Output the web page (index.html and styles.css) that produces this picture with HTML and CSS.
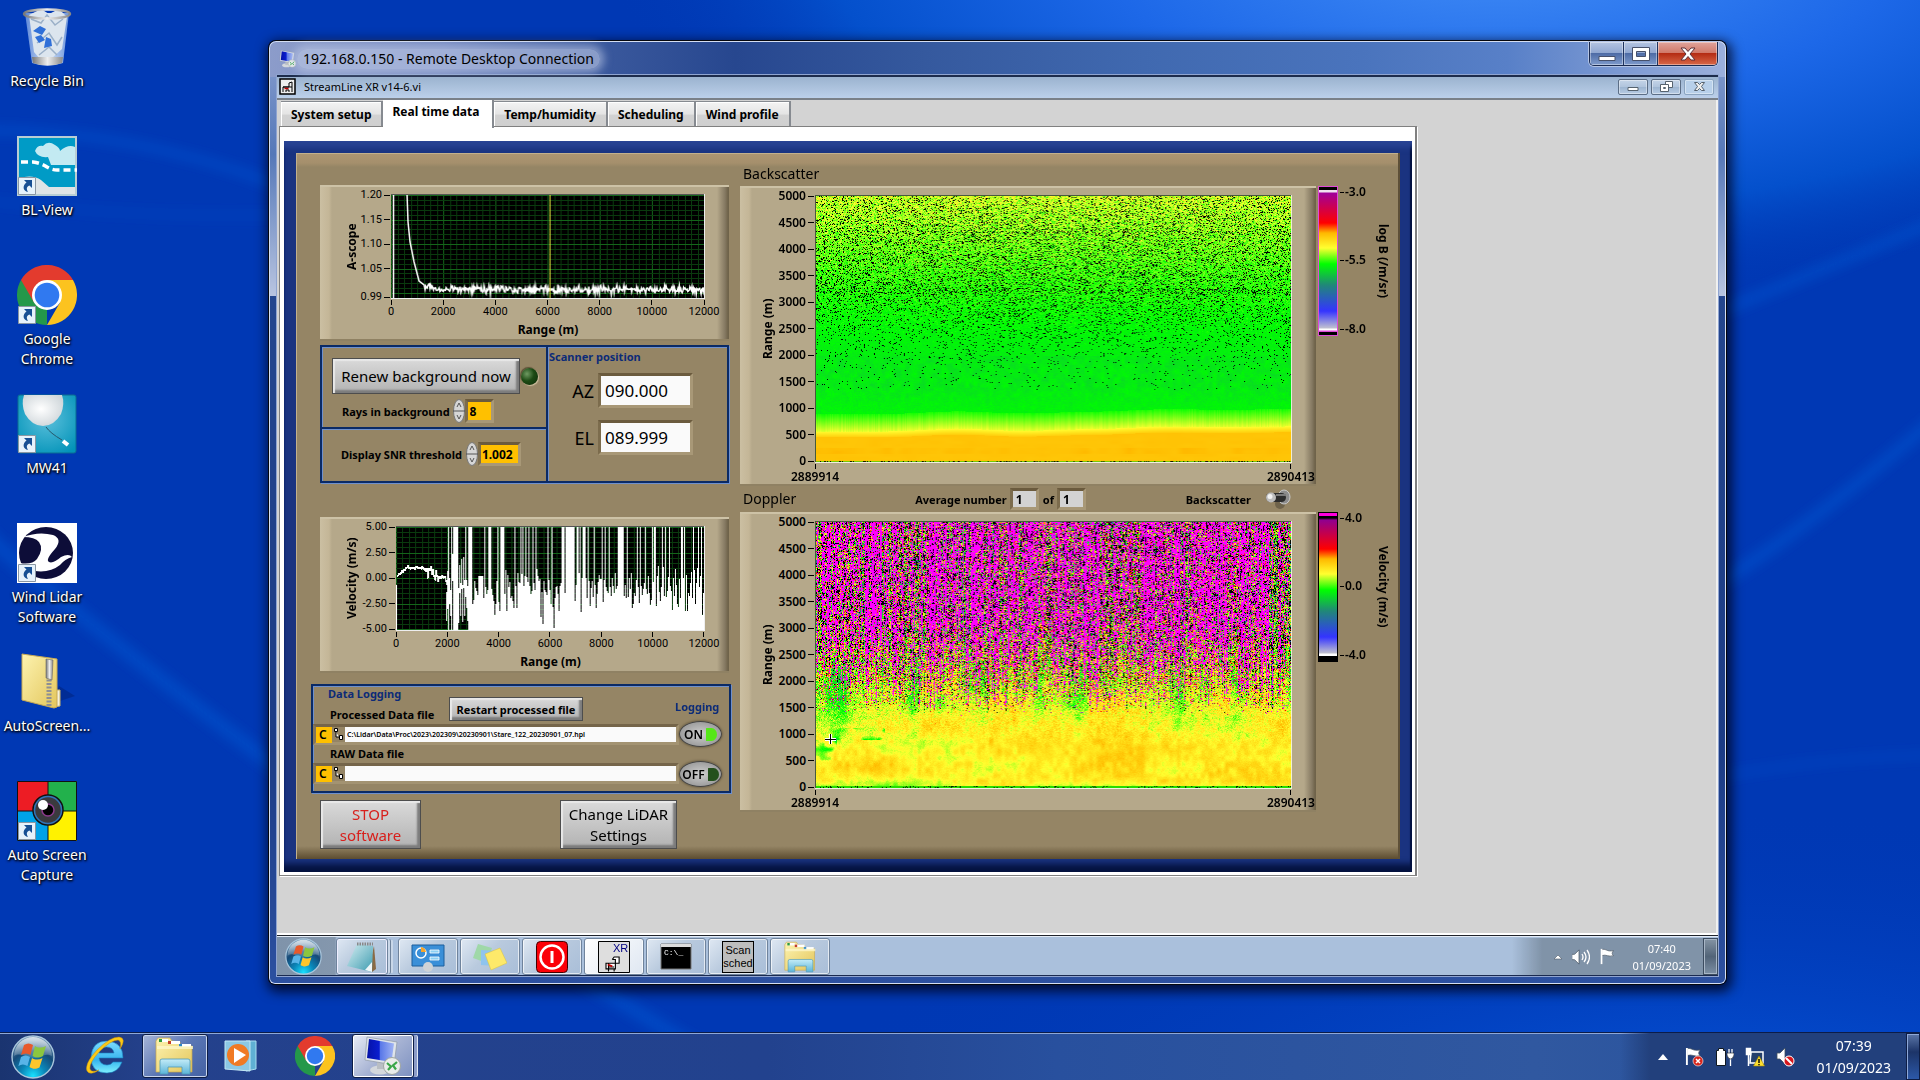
FILE: index.html
```html
<!DOCTYPE html>
<html lang="en">
<head>
<meta charset="utf-8">
<title>Desktop</title>
<link rel="stylesheet" href="styles.css">
</head>
<body>
<svg class="defs" width="0" height="0" aria-hidden="true">
  <defs>
    <radialGradient id="orbFill" cx="50%" cy="95%" r="85%">
      <stop offset="0" stop-color="#19e0ff"/><stop offset=".35" stop-color="#0a86b8"/><stop offset=".7" stop-color="#164a78"/><stop offset="1" stop-color="#5f87a8"/>
    </radialGradient>
    <linearGradient id="gloss" x2="0" y2="1"><stop offset="0" stop-color="#fff" stop-opacity=".75"/><stop offset="1" stop-color="#fff" stop-opacity=".12"/></linearGradient>
    <linearGradient id="folderFill" x2="1" y2="1"><stop offset="0" stop-color="#fdf3b0"/><stop offset="1" stop-color="#e3c65c"/></linearGradient>
    <linearGradient id="glass" x2="0" y2="1"><stop offset="0" stop-color="#c4ecf8"/><stop offset="1" stop-color="#5bb4d8"/></linearGradient>
    <linearGradient id="screen" x2="1"><stop offset="0" stop-color="#0512a8"/><stop offset=".45" stop-color="#0a1ed0"/><stop offset=".5" stop-color="#5a78e8"/><stop offset="1" stop-color="#a0b4f4"/></linearGradient>
    <linearGradient id="eFill" x2="0" y2="1"><stop offset="0" stop-color="#7fdcff"/><stop offset=".6" stop-color="#35b4ee"/><stop offset="1" stop-color="#7ff0ff"/></linearGradient>
    <linearGradient id="binFill" x2="1"><stop offset="0" stop-color="#5b86d8"/><stop offset=".5" stop-color="#d8e6f6"/><stop offset="1" stop-color="#6c94dc"/></linearGradient>
    <linearGradient id="metal" x2="1"><stop offset="0" stop-color="#777"/><stop offset=".5" stop-color="#eee"/><stop offset="1" stop-color="#888"/></linearGradient>
    <radialGradient id="balloon" cx=".45" cy=".45" r=".6"><stop offset="0" stop-color="#fff"/><stop offset="1" stop-color="#cfd6da"/></radialGradient>
    <radialGradient id="teal" cx=".5" cy=".4" r=".7"><stop offset="0" stop-color="#5cc0dc"/><stop offset="1" stop-color="#0293b8"/></radialGradient>
    <linearGradient id="note" x2="1" y2="1"><stop offset="0" stop-color="#d6eef2"/><stop offset="1" stop-color="#3d9cb0"/></linearGradient>

    <symbol id="orb" viewBox="0 0 44 44">
      <circle cx="22" cy="22" r="21" fill="url(#orbFill)" stroke="#a9c6dc" stroke-width="1.4"/>
      <path d="M3 21a19 19 0 0 1 38 0c-8-4-12 3-19 2S9 17 3 21z" fill="url(#gloss)"/>
      <path d="M13 10c3-2 6-2 9 0l-2.600 10c-3-2-6-2-9.400 0z" fill="#e8592b"/>
      <path d="M24 11c3 2 7 2 11 0l-3 10c-4 2-7 2-10.500 0z" fill="#8cc63f"/>
      <path d="M10 22c3-2 6-2 9 0l-2.600 9c-3-2-6-2-9 0z" fill="#58b4e8"/>
      <path d="M21 23c3 2 7 2 10.500 0l-3 9.500c-4 2-7 1.500-10-.5z" fill="#fcc62c"/>
    </symbol>
    <symbol id="chrome" viewBox="0 0 60 60">
      <path d="M30 30 4 15a30 30 0 0 1 52 0z" fill="#e33b2e"/>
      <path d="M30 30 30 60A30 30 0 0 1 4 15z" fill="#24984a"/>
      <path d="M30 15H56A30 30 0 0 1 30 60L43 37.500z" fill="#fcc31f"/>
      <path d="M4 15 17 37.500 30 30 30 15z" fill="#e33b2e"/>
      <circle cx="30" cy="30" r="15" fill="#fff"/><circle cx="30" cy="30" r="12.300" fill="#3079f0"/>
    </symbol>
    <symbol id="shortcut" viewBox="0 0 18 18">
      <path d="M.5.5h17v17H.5z" fill="#e6f2fb" stroke="#8a97a3"/>
      <path d="M6 3h8v8l-2.500-2.500C8 10 8.500 12 10 15c-5-1-6-6-1.500-9.500z" fill="#174f93"/>
    </symbol>
    <symbol id="explorer" viewBox="0 0 40 38">
      <path d="M1 4 3 1h12l2 3 8 1v3l12 1v26H1z" fill="url(#folderFill)" stroke="#c9a84a" stroke-width=".7"/>
      <path d="M4 2h9v3H4z" fill="#fff"/><path d="M4 2h3v3H4z" fill="#2f9a3c"/>
      <path d="M13 4h12v3H13z" fill="#fff"/><path d="M13 4h3v3h-3z" fill="#c4402b"/>
      <path d="M24 7h12v3H24z" fill="#fff"/><path d="M24 7h3v3h-3z" fill="#2c87c8"/>
      <path d="M2 9h36v3H2z" fill="#fdf6c8" opacity=".8"/>
      <path d="M5 37V24q0-2 2-2h26q2 0 2 2v13h-8v-7H13v7z" fill="url(#glass)" stroke="#4f9ab8" stroke-width=".8"/>
    </symbol>
    <symbol id="remote" viewBox="0 0 40 40">
      <ellipse cx="17" cy="34" rx="10" ry="4.500" fill="#d4d8dc"/><path d="M14 25h7v8h-7z" fill="#b9bec4"/>
      <path d="M4 1 34 6 31 29 2 24z" fill="#dfe4ea" stroke="#8e98a4" stroke-width=".7"/>
      <path d="M6 3 31 7.500 28.500 26 4 22z" fill="url(#screen)"/>
      <circle cx="29" cy="30" r="8.500" fill="#e9ecea" stroke="#9fa6a2"/>
      <path d="m24 27 4 3.500-3 3.500M34 26l-4 3.500 3 4" fill="none" stroke="#3aa648" stroke-width="2.200"/>
    </symbol>
    <symbol id="vi" viewBox="0 0 28 32">
      <path d="M2 18h15v9H2zM6 18v13M15 27v4M6 24h9M17 18v-6h-5M12 12l3-4h8v10h-6" fill="#fff" stroke="#000" stroke-width="1.800"/>
      <path d="m5 20 7 3" stroke="#c00000" stroke-width="3"/>
    </symbol>
    <symbol id="flag" viewBox="0 0 18 20"><path d="M2 1v18M2 2c5-2 6 3 14 1-2 3-2 4 0 6-6 2-8-2-14 0z" fill="#fff" stroke="#4a5663" stroke-width=".8"/><path d="M2 1v18" stroke="#fff" stroke-width="2"/></symbol>
    <symbol id="speaker" viewBox="0 0 18 18"><path d="M1 6h3l5-5v16l-5-5H1z" fill="#fff" stroke="#42505e" stroke-width=".8"/></symbol>
  </defs>
</svg>

<svg class="wallpaper" viewBox="0 0 1920 1080" preserveAspectRatio="none" aria-hidden="true">
  <defs>
    <radialGradient id="sky" gradientUnits="userSpaceOnUse" cx="1500" cy="-60" r="900" gradientTransform="matrix(1 0 0 .4 0 -36)">
      <stop offset="0" stop-color="#4590f8"/><stop offset=".45" stop-color="#1d68e8"/><stop offset=".75" stop-color="#0450cc"/><stop offset="1" stop-color="#0038b4" stop-opacity="0"/>
    </radialGradient>
    <radialGradient id="floor" gradientUnits="userSpaceOnUse" cx="1700" cy="1130" r="900" gradientTransform="matrix(1 0 0 .36 0 723)">
      <stop offset="0" stop-color="#0656dc"/><stop offset="1" stop-color="#0038b4" stop-opacity="0"/>
    </radialGradient>
    <filter id="soft"><feGaussianBlur stdDeviation="6"/></filter>
  </defs>
  <path fill="#0038b4" d="M0 0h1920v1080H0z"/>
  <path fill="url(#sky)" d="M0 0h1920v1080H0z"/>
  <path fill="url(#floor)" d="M0 0h1920v1080H0z"/>
  <g filter="url(#soft)" fill="none" stroke="#0a62dc" stroke-opacity=".4">
    <path d="M-20 130Q140 130 290 190T640 420" stroke-width="8"/>
    <path d="M-20 200Q140 220 300 214" stroke-width="3"/>
    <path d="M-20 530Q80 620 280 770T700 1050" stroke-width="14"/>
    <path d="M1700 595Q1800 535 1940 415" stroke-width="12"/>
    <path d="M1700 320Q1820 270 1940 220" stroke-width="10"/>
    <path d="M1700 780Q1820 757 1940 755" stroke-width="4"/>
  </g>
</svg>

<main class="desk">
  <nav class="icons" aria-label="Desktop">
    <a class="icon" href="#bin">
      <svg width="60" height="60" viewBox="0 0 60 60"><path d="M8 6h44l-6 50q-16 5-31 0z" fill="url(#binFill)"/><path d="m12 8 12-6 8 5 10-5 8 8-5 32-10 9-12 1-6-7z" fill="#dce5ee"/><path d="m14 12 10 4 6-8 8 10 8-6M20 36l12-10 8 12 5-8M22 48l10-8 8 8" fill="none" stroke="#9bb0c8" stroke-width="1.500"/><path d="m16 24 7-5 6 3-4 6zM22 36l-4-6 6-2 4 5zM29 30l5 2 1 7-8 2z" fill="#2f6fd8"/><path d="m15 50 31 0-1 6q-14 5-29 0z" fill="url(#metal)"/><ellipse cx="30" cy="7" rx="23" ry="4.500" fill="none" stroke="url(#metal)" stroke-width="2.500"/></svg>
      <span>Recycle Bin</span></a>
    <a class="icon" href="#blview">
      <svg width="60" height="60" viewBox="0 0 60 60"><path d="M0 0h60v60H0z" fill="#b8cdd4"/><path d="M2 2h56v56H2z" fill="#009bc6"/><path d="M18 15q2-6 8-5 5-6 12-1 5 3 5 6 8-7 15-4v18H34l-3-8q-10 1-13-6z" fill="#c3eaf2"/><path d="M4 26h12q8 1 14 5 5 3 10 3h20" fill="none" stroke="#fff" stroke-width="3.500" stroke-dasharray="7 4"/><path d="M2 42q14-4 22 2l8 7h26v7H2z" fill="#dfe4e6"/><use href="#shortcut" x="1" y="41" width="18" height="18"/></svg>
      <span>BL-View</span></a>
    <a class="icon" href="#chrome-app">
      <svg width="60" height="60" viewBox="0 0 60 60"><use href="#chrome" width="60" height="60"/><use href="#shortcut" x="1" y="41" width="18" height="18"/></svg>
      <span>Google Chrome</span></a>
    <a class="icon" href="#mw41">
      <svg width="60" height="60" viewBox="0 0 60 60"><rect x="1" y="1" width="58" height="58" rx="2" fill="url(#teal)" stroke="#0a6d92"/><path d="M7 1h38q3 9-1 19-7 12-18 12T8 20Q4 10 7 1z" fill="url(#balloon)"/><path d="M29 33q4 6 16 13" fill="none" stroke="#26576b"/><path d="m46 47 5 4" stroke="#fff" stroke-width="4"/><use href="#shortcut" x="1" y="41" width="18" height="18"/></svg>
      <span>MW41</span></a>
    <a class="icon" href="#lidar">
      <svg width="60" height="60" viewBox="0 0 60 60"><path d="M0 0h60v60H0z" fill="#fff"/><ellipse cx="29" cy="30" rx="27" ry="26" fill="#0d0d38"/><path d="M6 14Q22 8 36 12q10 4 2 14-10 11-6 13 4 2 12-5 8-4 11 0-7 2-12 8-10 8-25 6Q6 44 3 40q12 2 17-4 7-10 2-17Q18 14 6 14z" fill="#fff"/><use href="#shortcut" x="1" y="41" width="18" height="18"/></svg>
      <span>Wind Lidar Software</span></a>
    <a class="icon" href="#zip">
      <svg width="60" height="60" viewBox="0 0 60 60"><path d="m34 52 24-8-16-10z" fill="#001c66" opacity=".4"/><path d="M36 38h7v16l-7 1z" fill="#f4f0dc" stroke="#c9b468"/><path d="m5 2 35 5v48l-3 1L5 48z" fill="url(#folderFill)" stroke="#c7a954"/><path d="M32 24v30" stroke="#8d8f94" stroke-width="5" stroke-dasharray="2 1.500"/><path d="m29 7 7 1-1 20-6-2z" fill="url(#metal)" stroke="#666" stroke-width=".6"/></svg>
      <span>AutoScreen...</span></a>
    <a class="icon" href="#capture">
      <svg width="60" height="60" viewBox="0 0 60 60"><path d="M0 0h31v30H0z" fill="#ed1c24"/><path d="M31 0h29v30H31z" fill="#22b14c"/><path d="M0 30h31v30H0z" fill="#00a2e8"/><path d="M31 30h29v30H31z" fill="#fff200"/><path d="M.5.500h59v59H.500zM31 0v60M0 30h60" fill="none" stroke="#111"/><circle cx="31" cy="29" r="15" fill="#3a3a3e" stroke="#111" stroke-width="1.500"/><circle cx="31" cy="29" r="13.500" fill="none" stroke="#2f74b8" stroke-width="1.500"/><circle cx="31" cy="29" r="6" fill="#000" stroke="#8c3a8c" stroke-width="1.500"/><circle cx="26" cy="24" r="5" fill="#fff"/><use href="#shortcut" x="1" y="41" width="18" height="18"/></svg>
      <span>Auto Screen Capture</span></a>
  </nav>

  <section class="window" aria-label="Remote Desktop Connection">
    <header class="titlebar">
      <svg width="18" height="18"><use href="#remote"/></svg>
      <h1>192.168.0.150 - Remote Desktop Connection</h1>
      <div class="caption-buttons">
        <button aria-label="Minimize"><svg width="18" height="14" viewBox="0 0 18 14"><path d="M1 9.500h16v4H1z" fill="#fff" stroke="#47506a"/></svg></button>
        <button aria-label="Maximize"><svg width="18" height="14" viewBox="0 0 18 14"><path d="M.5.5h17v13H.5zM4.500 4.500v5h9v-5z" fill="#fff" fill-rule="evenodd" stroke="#47506a"/></svg></button>
        <button class="close" aria-label="Close"><svg width="16" height="14" viewBox="0 0 16 14"><path d="M1 1h4l3 3.500L11 1h4l-5 6 5 6h-4L8 9.500 5 13H1l5-6z" fill="#fff" stroke="#5c3038"/></svg></button>
      </div>
    </header>

    <div class="client">
      <header class="mdi">
        <svg width="17" height="17" viewBox="0 0 17 17"><path d="M1 1h15v15H1z" fill="#eee" stroke="#000" stroke-width="1.500"/><path d="M4 14V9h9v5M4 9h6V5l3-1v5M7 14v-2h3v2" fill="none" stroke="#000"/><path d="M5.500 10.500h4" stroke="#c00000" stroke-width="1.500"/></svg>
        <h2>StreamLine XR v14-6.vi</h2>
        <div class="mdi-buttons">
          <button aria-label="Minimize VI"><svg width="12" height="10" viewBox="0 0 12 10"><path d="M1 5.500h10v3H1z" fill="#fff" stroke="#56626e"/></svg></button>
          <button aria-label="Restore VI"><svg width="13" height="11" viewBox="0 0 13 11"><path d="M5.500.5h7v6h-7z" fill="#fff" stroke="#56626e"/><path d="M.5 3.500h8v7h-8z" fill="#fff" stroke="#56626e"/><path d="M3.500 6.500h2v1h-2z" fill="#fff" stroke="#56626e"/></svg></button>
          <button class="dim" aria-label="Close VI"><svg width="11" height="9" viewBox="0 0 11 9"><path d="M.5.5h3l2 2 2-2h3l-3 4 3 4h-3l-2-2-2 2h-3l3-4z" fill="#eee" stroke="#56626e"/></svg></button>
        </div>
      </header>

      <div class="workspace">
        <div class="tabs" role="tablist">
          <button role="tab">System setup</button>
          <button role="tab" class="active" aria-selected="true">Real time data</button>
          <button role="tab">Temp/humidity</button>
          <button role="tab">Scheduling</button>
          <button role="tab">Wind profile</button>
        </div>
        <div class="tab-page">
          <div class="blue-frame">
            <div class="front-panel">
              <div class="left">
                <section class="panel small">
                  <h3 class="y-title">A-scope</h3>
                  <ul class="y-axis uneven"><li>1.20</li><li>1.15</li><li>1.10</li><li>1.05</li><li>0.99</li></ul>
                  <canvas id="ascope" width="313" height="105"></canvas>
                  <ul class="x-axis"><li>0</li><li>2000</li><li>4000</li><li>6000</li><li>8000</li><li>10000</li><li>12000</li></ul>
                  <h3 class="x-title">Range (m)</h3>
                </section>

                <div class="controls">
                  <div class="group renew">
                    <div class="row"><button class="metal big">Renew background now</button><i class="led"></i></div>
                    <div class="row rays"><label for="rays">Rays in background</label>
                      <svg class="spin" width="12" height="24" viewBox="0 0 12 24"><ellipse cx="6" cy="12" rx="5.500" ry="11.500" fill="#d6d6d6" stroke="#777"/><path d="M0 12h12M4 8l2-4 2 4M4 16l2 4 2-4" fill="none" stroke="#555"/></svg>
                      <input class="sunk amber w1" id="rays" value="8"></div>
                  </div>
                  <div class="group snr">
                    <div class="row"><label for="snr">Display SNR threshold</label>
                      <svg class="spin" width="12" height="24" viewBox="0 0 12 24"><ellipse cx="6" cy="12" rx="5.500" ry="11.500" fill="#d6d6d6" stroke="#777"/><path d="M0 12h12M4 8l2-4 2 4M4 16l2 4 2-4" fill="none" stroke="#555"/></svg>
                      <input class="sunk amber w2" id="snr" value="1.002"></div>
                  </div>
                  <div class="group scanner">
                    <h3 class="blue">Scanner position</h3>
                    <div class="row"><label for="az">AZ</label><input class="sunk pos" id="az" value="090.000"></div>
                    <div class="row"><label for="el">EL</label><input class="sunk pos" id="el" value="089.999"></div>
                  </div>
                </div>

                <section class="panel small velocity">
                  <h3 class="y-title">Velocity (m/s)</h3>
                  <ul class="y-axis"><li>5.00</li><li>2.50</li><li>0.00</li><li>-2.50</li><li>-5.00</li></ul>
                  <canvas id="velocity" width="308" height="105"></canvas>
                  <ul class="x-axis"><li>0</li><li>2000</li><li>4000</li><li>6000</li><li>8000</li><li>10000</li><li>12000</li></ul>
                  <h3 class="x-title">Range (m)</h3>
                </section>

                <section class="group logging">
                  <div class="files">
                    <h3 class="blue">Data Logging</h3>
                    <div class="row"><label for="proc">Processed Data file</label><button class="metal restart">Restart processed file</button></div>
                    <div class="path"><b>C</b><svg width="9" height="15" viewBox="0 0 9 15"><path d="M.5 1.500h3v3h-3zM2 5v5h3M5.500 8.500h3v4h-3z" fill="#fff" stroke="#000"/></svg><input id="proc" value="C:\Lidar\Data\Proc\2023\202309\20230901\Stare_122_20230901_07.hpl"></div>
                    <label for="raw">RAW Data file</label>
                    <div class="path"><b>C</b><svg width="9" height="15" viewBox="0 0 9 15"><path d="M.5 1.500h3v3h-3zM2 5v5h3M5.500 8.500h3v4h-3z" fill="#fff" stroke="#000"/></svg><input id="raw" value=""></div>
                  </div>
                  <div class="switches">
                    <h3 class="blue">Logging</h3>
                    <button class="oval on">ON<i></i></button>
                    <button class="oval">OFF<i></i></button>
                  </div>
                </section>

                <div class="actions">
                  <button class="metal stop">STOP software</button>
                  <button class="metal change">Change LiDAR Settings</button>
                </div>
              </div>

              <div class="right">
                <h3 class="plot-name first">Backscatter</h3>
                <div class="map">
                  <section class="panel large">
                    <h3 class="y-title">Range (m)</h3>
                    <ul class="y-axis ten"><li>5000</li><li>4500</li><li>4000</li><li>3500</li><li>3000</li><li>2500</li><li>2000</li><li>1500</li><li>1000</li><li>500</li><li>0</li></ul>
                    <canvas id="backscatter" width="478" height="268"></canvas>
                    <ul class="x-axis ends"><li>2889914</li><li>2890413</li></ul>
                  </section>
                  <div class="scale">
                    <i class="ramp"></i>
                    <ul class="ramp-axis"><li>-3.0</li><li>-5.5</li><li>-8.0</li></ul>
                    <h3>log B (/m/sr)</h3>
                  </div>
                </div>
                <div class="between">
                  <h3 class="plot-name">Doppler</h3>
                  <label for="avg">Average number</label><input class="sunk count" id="avg" value="1">
                  <label for="avg-of">of</label><input class="sunk count" id="avg-of" value="1">
                  <span class="toggle-label">Backscatter</span>
                  <button class="toggle" aria-label="Backscatter display"><svg width="26" height="20" viewBox="0 0 26 20"><ellipse cx="15" cy="15" rx="5" ry="5" fill="#000" opacity=".25"/><ellipse cx="19" cy="8" rx="6" ry="7" fill="#8d8d8d" stroke="#c8c8c8"/><rect x="1" y="4" width="20" height="9" rx="4.500" fill="#2c2c2c"/><path d="M11 6h10" stroke="#7a7a7a" stroke-width="2"/><circle cx="6" cy="8.500" r="5" fill="#bdbdbd"/><circle cx="5" cy="7.500" r="2.500" fill="#f2f2f2"/></svg></button>
                </div>
                <div class="map">
                  <section class="panel large">
                    <h3 class="y-title">Range (m)</h3>
                    <ul class="y-axis ten"><li>5000</li><li>4500</li><li>4000</li><li>3500</li><li>3000</li><li>2500</li><li>2000</li><li>1500</li><li>1000</li><li>500</li><li>0</li></ul>
                    <canvas id="doppler" width="478" height="268"></canvas>
                    <ul class="x-axis ends"><li>2889914</li><li>2890413</li></ul>
                  </section>
                  <div class="scale">
                    <i class="ramp dop"></i>
                    <ul class="ramp-axis"><li>4.0</li><li>0.0</li><li>-4.0</li></ul>
                    <h3>Velocity (m/s)</h3>
                  </div>
                </div>
              </div>
            </div>
          </div>
        </div>
      </div>

      <footer class="inner-bar">
        <button class="start" aria-label="Inner start"><svg width="37" height="37"><use href="#orb"/></svg></button>
        <button class="task stacked" aria-label="Notepad"><svg width="32" height="32" viewBox="0 0 32 32"><path d="M28 5 30 28l-4 3-3-5z" fill="#8a6a44"/><path d="M11 3 27 5 26 31 1 25z" fill="url(#note)"/><path d="m26 31-7-2 7-8z" fill="#eef6f8"/><path d="M11 3h16" stroke="#888" stroke-width="3" stroke-dasharray="1.500 1"/></svg></button>
        <button class="task" aria-label="Control panel"><svg width="34" height="32" viewBox="0 0 34 32"><path d="M1 4h32v21H1z" fill="#3a8fd8" stroke="#1c5f9c"/><circle cx="10" cy="12" r="5" fill="none" stroke="#fff" stroke-width="1.500"/><path d="M10 6a6 6 0 0 1 5 5h-5z" fill="#f5a52c"/><path d="M19 9h9v3h-9zM19 16h9v3h-9z" fill="#8cd0f4" stroke="#fff" stroke-width=".8"/><circle cx="17" cy="26" r="5" fill="#cfd3d6"/></svg></button>
        <button class="task" aria-label="Sticky notes"><svg width="34" height="30" viewBox="0 0 34 30"><path d="m5 2 14 4-5 15L0 16z" fill="#9fd8a8"/><path d="m8 8 15 1-1 15-14-1z" fill="#8fc4ee"/><path d="m12 12 15-6 7 15-16 7z" fill="#fde96a" stroke="#d9c23c" stroke-width=".5"/></svg></button>
        <button class="task" aria-label="Power"><svg width="32" height="32" viewBox="0 0 32 32"><rect x=".5" y=".5" width="31" height="31" rx="4" fill="#fb0007" stroke="#400"/><circle cx="16" cy="16" r="11.500" fill="none" stroke="#fff" stroke-width="2.500"/><path d="M16 10v12" stroke="#fff" stroke-width="3"/></svg></button>
        <button class="task lit" aria-label="XR"><svg width="32" height="32" viewBox="0 0 32 32"><path d="M.5.5h31v31H.5z" fill="#dedede" stroke="#000"/><text x="15" y="11" class="xr">XR</text><use href="#vi" x="6" y="11" width="19" height="20"/></svg></button>
        <button class="task" aria-label="Command prompt"><svg width="32" height="28" viewBox="0 0 32 28"><path d="M1 1h30v25H1z" fill="#000" stroke="#777"/><path d="M1 1h30v3H1z" fill="#dcdcdc"/><text x="4" y="12" class="cmd">C:\_</text></svg></button>
        <button class="task" aria-label="Scan sched"><span class="scan">Scan<br>sched</span></button>
        <button class="task" aria-label="Explorer"><svg width="33" height="32"><use href="#explorer"/></svg></button>
        <div class="inner-tray">
          <svg width="10" height="6" viewBox="0 0 10 6"><path d="m1 5 4-4 4 4z" fill="#fff" stroke="#4d5b68" stroke-width=".6"/></svg>
          <svg width="18" height="16" viewBox="0 0 18 16"><use href="#speaker" width="16" height="16" x="-1"/><path d="M10 5q2 3 0 6M12 3q4 5 0 10M15 1q5 7 0 14" fill="none" stroke="#fff" stroke-width="1.300"/></svg>
          <svg width="17" height="17"><use href="#flag"/></svg>
          <time>07:40<br>01/09/2023</time>
          <button class="peek" aria-label="Show inner desktop"></button>
        </div>
      </footer>
    </div>
  </section>
</main>

<footer class="taskbar">
  <button class="start" aria-label="Start"><svg width="44" height="44"><use href="#orb"/></svg></button>
  <button class="pin" aria-label="Internet Explorer"><svg width="40" height="40" viewBox="0 0 40 40"><path d="M38 22H14q1 7 8 7 4 0 6-3h9q-4 11-15 11Q6 37 6 21 7 5 22 5q16 1 16 17zM14 17h15q-1-6-7.500-6T14 17z" fill="url(#eFill)" stroke="#1a7fc0" stroke-width=".6"/><path d="M35 13Q42 2 34 1 25 1 12 14-1 28 2 35q3 5 12-1-8 3-9-1-1-6 9-17Q26 4 33 4q4 1 2 9z" fill="#fbc916" stroke="#c98f0c" stroke-width=".5"/></svg></button>
  <button class="pin open" aria-label="Windows Explorer"><svg width="40" height="38"><use href="#explorer"/></svg></button>
  <button class="pin" aria-label="Media Player"><svg width="34" height="34" viewBox="0 0 34 34"><path d="M22 2h10v28l-10 2z" fill="#5fb0d4" stroke="#a8dcf0"/><path d="M1 2h25v30L1 30z" fill="#8cc8e4" stroke="#c4e8f6"/><circle cx="14" cy="16" r="11" fill="#f07a24"/><path d="m10 9 12 7-12 8z" fill="#fff"/></svg></button>
  <button class="pin chrome" aria-label="Chrome"><svg width="40" height="40"><use href="#chrome"/></svg></button>
  <button class="pin current" aria-label="Remote Desktop"><svg width="40" height="40"><use href="#remote"/></svg></button>
  <div class="tray">
    <svg width="10" height="6" viewBox="0 0 10 6"><path d="m0 6 5-6 5 6z" fill="#fff"/></svg>
    <svg width="19" height="20" viewBox="0 0 19 20"><use href="#flag" width="17" height="19"/><circle cx="13" cy="14" r="5" fill="#d8261c" stroke="#fff" stroke-width=".6"/><path d="m11 12 4 4m0-4-4 4" stroke="#fff" stroke-width="1.500"/></svg>
    <svg width="19" height="20" viewBox="0 0 19 20"><path d="M1.500 3.500h2v-2h5v2h2v15h-9z" fill="#fff" stroke="#101820"/><path d="M14 2v4m3-4v4M15.500 10v9" fill="none" stroke="#fff" stroke-width="1.300"/><path d="M12 6h7v2q-1 4-3.500 4T12 8z" fill="#fff" stroke="#101820" stroke-width=".6"/></svg>
    <svg width="20" height="20" viewBox="0 0 20 20"><path d="M6 5h12v11H5z" fill="#24406c" stroke="#fff" stroke-width="1.500"/><path d="M1.500 1.500h4v6h-4zM3.500 8v11" fill="#fff" stroke="#fff" stroke-width="1.500"/><path d="m14 9 5.500 10h-11z" fill="#ffe030" stroke="#a88c00" stroke-width=".6"/><path d="M14 12v4m0 1v1.200" stroke="#000" stroke-width="1.400"/></svg>
    <svg width="19" height="20" viewBox="0 0 19 20"><use href="#speaker" width="18" height="18"/><circle cx="13" cy="14" r="5" fill="#d8161c" stroke="#fff"/><path d="m10 11 6 6" stroke="#fff" stroke-width="2"/></svg>
    <time>07:39<br>01/09/2023</time>
    <button class="peek" aria-label="Show desktop"></button>
  </div>
</footer>
<script src="plots.js"></script>
</body>
</html>
```
FILE: styles.css
```css
* { box-sizing: border-box; }

body {
  margin: 0;
  min-height: 100vh;
  display: flex;
  flex-direction: column;
  position: relative;
  background: #0038b4;
  font-family: "Noto Sans", "Open Sans", sans-serif;
  font-size: 12px;
  color: #000;
}

h1, h2, h3, ul { margin: 0; padding: 0; list-style: none; font-size: inherit; }
button, input { font: inherit; color: inherit; margin: 0; padding: 0; border: 0; border-radius: 0; }
svg, canvas { display: block; }
.defs { position: absolute; }

.wallpaper { position: absolute; inset: 0; width: 100%; height: 100%; z-index: -1; }

/* Desktop */
.desk { flex: 1; display: flex; align-items: flex-start; padding-right: 194px; }

.icons { flex: 0 0 94px; margin-right: 175px; padding-top: 7px; display: grid; grid-auto-rows: 129px; }
.icon {
  display: flex;
  flex-direction: column;
  align-items: center;
  gap: 4px;
  font-size: 14px;
  line-height: 20px;
  text-align: center;
  color: #fff;
  text-decoration: none;
  text-shadow: 1px 1px 2px #000, 0 1px 3px #000;
}

/* Remote desktop window */
.window {
  flex: 1;
  min-width: 0;
  margin-top: 41px;
  padding: 0 8px 8px;
  border-radius: 7px 7px 6px 6px;
  background: linear-gradient(90deg, #8c9cca, #7488c0 12%, #3c5a9e 22%, #27478f 32%, #35599e 45%, #4069b0 60%, #4a74bd 75%, #5880c8 85%, #9cb0dc) 0 0 / 100% 36px no-repeat,
    linear-gradient(#8aa0d0, #5578b8 12%, #b8c4e0 27%, #24468e 27%, #1c3c86 75%, #2c50a0);
  box-shadow: inset 0 0 0 1px #d4def2, 0 0 0 1px #05070d, 2px 4px 12px 4px rgba(0,0,20,.75);
}
.titlebar { display: flex; align-items: center; height: 34px; padding-top: 1px; }
.titlebar > svg { margin-left: 2px; }
.titlebar h1 {
  padding: 0 6px;
  font-size: 14px;
  line-height: 20px;
  font-weight: 400;
  border-radius: 10px;
  background: rgba(190,202,230,.6);
  box-shadow: 0 0 8px 4px rgba(190,202,230,.6);
}
.caption-buttons { display: flex; align-self: flex-start; margin-left: auto; border: 1px solid #1a2a50; border-top: 0; border-radius: 0 0 5px 5px; box-shadow: 0 0 0 1px #b4c4e4; overflow: hidden; }
.caption-buttons button {
  width: 34px;
  height: 23px;
  padding-top: 1px;
  display: grid;
  place-items: center;
  border-right: 1px solid #1f335f;
  background: linear-gradient(#b4c4e2, #8fa6d0 48%, #4e6ca6 50%, #7f9bcc);
  box-shadow: inset 0 0 0 1px rgba(255,255,255,.4);
}
.caption-buttons .close { width: 59px; border: 0; background: linear-gradient(#e0a49c, #d07868 48%, #b42c14 50%, #d86848); }

.client { border-top: 2px solid #1d2c4c; display: flex; flex-direction: column; box-shadow: 0 0 0 1px #8fa4d0; }

.mdi { display: flex; align-items: center; height: 23px; padding: 0 4px 2px 2px; border-bottom: 2px solid #7a8088; background: linear-gradient(#9bb3cf, #bcd0ea); }
.mdi h2 { margin-left: 8px; font-size: 11px; font-weight: 400; line-height: 16px; }
.mdi-buttons { display: flex; gap: 3px; margin-left: auto; }
.mdi-buttons button { width: 30px; height: 16px; display: grid; place-items: center; border: 1px solid #5c6e86; border-radius: 2px; background: linear-gradient(#c4d4e8, #b0c4dc 50%, #9cb4d0 50%, #b8cce4); box-shadow: inset 0 0 0 1px rgba(255,255,255,.4); }
.mdi-buttons .dim { border-color: #8ba4c0; background: #b8d0ea; }

.workspace { padding: 1px 2px 57px 2px; background: #d3d3d3; border-right: 2px solid #f0f0f0; border-bottom: 2px solid #fff; }
.tabs { display: flex; align-items: flex-end; padding-left: 2px; height: 25px; }
.tabs button { height: 25px; padding: 0 10px; font-weight: 700; font-size: 12px; border: 1px solid #868a90; border-width: 1px 2px 0 0; background: linear-gradient(#f4f4f4, #e4e4e4 50%, #d2d2d2 55%, #cfcfcf); box-shadow: inset 1px 1px 0 #fff; }
.tabs .active { height: 28px; margin-bottom: -2px; padding: 0 13px 5px 9px; background: #fff; border-top: 0; position: relative; }

.tab-page { width: 79.3%; padding: 14px 3px 3px 4px; background: #fff; border: 1px solid #808080; border-right-width: 2px; box-shadow: 1px 1px 0 #fff; }
.blue-frame { padding: 12px 12px 13px; background: #1a3380; box-shadow: inset 0 12px 6px -6px #2a4596, inset 0 -12px 6px -4px #04123f, inset -2px 0 1px #04123f, inset 0 2px 2px #0a2060; }

.front-panel {
  display: grid;
  grid-template-columns: 444px minmax(0, 1fr);
  background: linear-gradient(#ad9672, #a58f6c 10px, transparent 14px), linear-gradient(0deg, #5c4c30, transparent 13px), #958565;
  border-right: 2px solid #5e5038;
  box-shadow: inset 1px 1px 0 #c2b08c;
  min-height: 706px;
}

.left { padding: 32px 13px 0 24px; display: flex; flex-direction: column; }

/* Raised plot panels */
.panel {
  background: linear-gradient(90deg, #cbbfa2, #c4b697 9px, transparent 12px), linear-gradient(270deg, #6f634a 1px, #857962 4px, transparent 12px), #b5a88a;
  box-shadow: inset 0 2px 0 #cdc2a6, inset 0 -2px 0 #8f8163;
  display: grid;
}
.y-title { writing-mode: vertical-rl; transform: rotate(180deg); font-weight: 700; text-align: center; line-height: 14px; }
.x-title { font-weight: 700; text-align: center; line-height: 14px; }
canvas { width: 100%; }

.y-axis { display: grid; grid-template-rows: repeat(4, 1fr) 0; justify-items: end; line-height: 0; }
.y-axis.uneven { grid-template-rows: 49fr 49fr 49fr 57fr 0; }
.y-axis.ten { grid-template-rows: repeat(10, 1fr) 0; }
.y-axis li { display: flex; align-items: center; gap: 2px; height: 0; min-height: 0; }
.y-axis li::after { content: ""; width: 6px; height: 1px; margin-right: 1px; background: #000; }
.x-axis { display: grid; grid-template-columns: repeat(6, 1fr) 0; }
.x-axis li { width: 0; display: flex; flex-direction: column; align-items: center; line-height: 14px; }
.x-axis li::before { content: ""; width: 1px; height: 5px; flex: none; background: #000; }

.small { width: 409px; height: 156px; padding: 9px 24px 0 25px; grid-template: 105px 24px 14px / 14px 32px 1fr; align-content: start; font-size: 12px; }
.small .x-axis, .small .x-title { grid-column: 3; }
.small ul { font-family: Roboto, sans-serif; font-size: 11px; font-weight: 400; }
.small .y-axis { padding: 1px 0 2px; }
.small .x-axis { padding: 1px 1px 0 0; }
.velocity { margin-top: 34px; grid-template-columns: 14px 37px 1fr; }

/* Control groups */
.group { border: 2px solid #0a2a66; box-shadow: inset 1px 1px 0 #6f90cc, 1px 1px 0 #6f90cc; }
.blue { color: #0c2b78; font-weight: 700; font-size: 11px; line-height: 16px; }
label, .toggle-label { font-weight: 700; font-size: 11px; }
.row { display: flex; align-items: center; }

.controls { width: 409px; margin-top: 4px; display: grid; grid-template: 82px 56px / 226px 1fr; }
.renew { margin: 0 -2px -2px 0; padding: 11px 0 0 10px; }
.rays { margin-top: 5px; padding-left: 10px; }
.rays .spin { margin-left: 3px; }
.snr { margin-right: -2px; padding: 13px 0 0 19px; }
.snr .spin { margin-left: 4px; }
.spin { flex: none; }
.scanner { grid-area: 1 / 2 / 3 / 3; padding-top: 2px; }
.scanner h3 { margin: 0 0 2px 1px; }
.scanner .row { gap: 4px; height: 47px; justify-content: flex-end; padding-right: 34px; }
.scanner .row label { font-size: 18px; font-weight: 400; }

.metal {
  border: 1px solid #4d4d4d;
  background: linear-gradient(#dadada, #b2b2b2);
  box-shadow: inset 2px 2px 1px #e8e8e8, inset -3px -3px 2px #7c7c7c;
}
.metal.big { width: 188px; height: 36px; font-size: 15px; }
.led { width: 17px; height: 17px; margin-left: 1px; border-radius: 50%; background: radial-gradient(circle at 35% 35%, #6f9a62, #1c4a14 45%, #0c2a08); box-shadow: 1px 1px 1px #cdbf9e, -1px -1px 1px #5c4f36; }

.sunk { border: 3px solid; border-color: #6b5b3e #a89877 #a89877 #7c6c4d; background: #fafafa; }
.amber { background: #ffc000; font-weight: 700; height: 24px; padding: 0 2px; }
.w1 { width: 29px; }
.w2 { width: 43px; padding: 0 1px; }
.pos { width: 95px; height: 35px; padding: 0 4px; font-size: 17px; }
.count { width: 29px; height: 22px; padding: 0 3px; background: #d3d3d3; font-weight: 700; }

.logging { margin: 11px 0 0 -9px; width: 420px; height: 109px; display: flex; justify-content: space-between; }
.files { width: 366px; display: flex; flex-direction: column; }
.files h3 { margin: 0 0 -4px 15px; }
.files label { padding-left: 17px; line-height: 18px; }
.files .row { justify-content: space-between; align-items: flex-end; padding-right: 96px; height: 26px; }
.restart { width: 134px; height: 24px; margin-bottom: 3px; font-weight: 700; font-size: 11px; }
.path { display: flex; align-items: center; gap: 2px; height: 21px; border: 3px solid; border-color: #75654a #a39372 #a39372 #85755a; }
.path b { width: 16px; height: 16px; padding-left: 3px; line-height: 16px; font-weight: 600; background: #ffc000; }
.path input { flex: 1; height: 15px; padding-left: 2px; font-size: 7px; font-weight: 600; background: #fafafa; }
.switches { width: 50px; display: flex; flex-direction: column; align-items: flex-start; }
.switches h3 { margin: 13px 0 6px -4px; }
.oval { flex: none; width: 43px; height: 26px; margin-bottom: 14px; border-radius: 50%; border: 1px solid #444; display: flex; align-items: center; justify-content: center; gap: 3px; font-weight: 600; font-size: 12px; background: radial-gradient(#cfcfcf, #8a8a8a); box-shadow: 0 0 2px 1px #75674b; }
.oval:last-child { margin-bottom: 0; }
.oval i { width: 11px; height: 13px; border-radius: 1px 90% 90% 1px; background: #24501c; }
.oval.on i { background: #55e818; }

.actions { display: flex; margin-top: 7px; }
.actions .metal { height: 49px; font-size: 15px; line-height: 21px; }
.stop { width: 101px; padding: 0 16px; color: #d8201c; }
.change { width: 117px; margin-left: 139px; }

/* Heat maps */
.plot-name { font-size: 14px; font-weight: 400; padding-left: 3px; line-height: 20px; }
.plot-name.first { padding-top: 11px; height: 33px; }
.map { display: flex; align-items: flex-start; }
.large { flex: 1; min-width: 0; height: 300px; padding: 9px 24px 0 21px; grid-template: 268px 22px / 14px 40px minmax(0, 1fr); align-content: start; }
.large ul { font-weight: 600; }
.large canvas { height: 268px; }
.large .y-axis { padding: 1px 0 2px; }
.large .x-axis { grid-column: 3; grid-template-columns: 1fr 0; padding: 1px 1px 0 0; }
.large .x-axis li { line-height: 15px; }

.scale { flex: 0 0 80px; margin-left: 2px; height: 150px; display: grid; grid-template-columns: 20px 1fr 14px; padding-right: 8px; }
.ramp { border: 1px solid #e04ad8; background: linear-gradient(#000 3px, #f0e0f0 3px 5px, #a0009a 6px, #f00 36px, #ffb800 46px, #ffff30 61px, #0f0 77px, #208878 98px, #3434ff 124px, #c0c0d0 141px, #fff 142px 143px, #e04ad8 144px 145px, #000 145px); }
.ramp.dop { border-color: #000; background: linear-gradient(#f0d 3px, #000 3px 5px, #900090 7px, #f00 36px, #ffb800 46px, #ffff30 61px, #0f0 77px, #208878 98px, #3434ff 124px, #c0c0d0 140px, #fff 141px 143px, #000 143px); }
.ramp-axis { display: grid; grid-template-rows: 68px 69px 0; padding-top: 6px; line-height: 0; font-weight: 600; }
.ramp-axis li { display: flex; align-items: center; gap: 1px; height: 0; }
.ramp-axis li::before { content: ""; width: 4px; height: 1px; margin-left: 2px; background: #000; }
.scale h3 { writing-mode: vertical-rl; text-align: center; line-height: 14px; }

.between { display: flex; align-items: center; height: 26px; padding-right: 107px; }
.between .plot-name { margin-right: 119px; }
.count { margin-left: 3px; margin-right: 4px; }
.between .count:last-of-type { margin-right: auto; }
.toggle { background: none; margin-left: 14px; }

/* Taskbar inside the remote session */
.inner-bar { display: flex; height: 41px; padding-top: 2px; border-top: 1px solid #20242c; background: linear-gradient(90deg, #7f93aa, #8497ad 58px, #aac0dc 60px); box-shadow: inset 0 1px 0 #e4ecf6; border-bottom: 1px solid #1a2a50; }
.start { background: none; display: grid; place-items: center; }
.inner-bar .start { width: 53px; margin-right: 6px; }
.task { flex: 0 0 60px; margin-right: 2px; display: grid; place-items: center; border: 1px solid #6f839c; border-radius: 3px; background: linear-gradient(135deg, #dfe8f3, #b9cade 45%, #a9bed8); box-shadow: inset 0 0 0 1px rgba(255,255,255,.65); }
.task.stacked { flex-basis: 52px; margin-right: 10px; box-shadow: inset 0 0 0 1px #eef, 3px 0 0 -1px #c9d7e8, 4px 0 0 -1px #6f839c, 7px 0 0 -2px #c9d7e8; }
.task.lit { background: linear-gradient(135deg, #fff, #dfe7f2); }
.xr { font: 11px "Liberation Sans", sans-serif; fill: #000080; }
.cmd { font: 8px "Liberation Mono", monospace; fill: #fff; }
.scan { width: 32px; height: 32px; border: 1px solid #000; background: #bdbdbd; font: 11px/13px "Liberation Sans", sans-serif; padding-top: 2px; }
.inner-tray { flex: 1; display: flex; align-items: center; justify-content: flex-end; background: linear-gradient(270deg, #8093a8 176px, transparent 206px); color: #fff; }
.inner-tray svg { margin-right: 9px; }
.inner-tray time { margin: 0 12px 0 7px; font-size: 11px; line-height: 17px; text-align: center; }
.peek { width: 15px; align-self: stretch; border: 1px solid #3c4c60; background: linear-gradient(#8494a4, #526478 50%, #7c8fa4); box-shadow: inset 0 0 0 1px #a8b6c6; }

/* Host taskbar */
.taskbar { display: flex; height: 48px; border-top: 1px solid #0c1c48; background: linear-gradient(90deg, #1a3470, #24418c 8%, #22428e 40%, #28509e 55%, #3058a0 80%, #24509c); box-shadow: inset 0 1px 0 #8ea8d8; }
.taskbar .start { width: 66px; }
.pin { width: 66px; margin: 1px 0 2px; display: grid; place-items: center; background: none; border-radius: 3px; }
.taskbar .start + .pin { margin-right: 7px; margin-left: 8px; width: 61px; }
.pin.open { border: 1px solid #0d1d45; background: linear-gradient(135deg, #a8b6d8, #5a76b4 50%, #4462a4); box-shadow: inset 0 0 0 1px #c8d4ec; }
.pin.chrome { margin-left: 8px; margin-right: 4px; }
.pin.current { width: 62px; border: 1px solid #0d1d45; background: linear-gradient(135deg, #e8ecf6, #a8b4d4 50%, #7c90c0); box-shadow: inset 0 0 0 1px #fff, 4px 0 0 -1px #8c9cc8, 5px 0 0 -1px #dfe6f4; }
.tray { flex: 1; display: flex; align-items: center; justify-content: flex-end; gap: 11px; color: #fff; background: linear-gradient(270deg, #22407c 270px, transparent 300px); }
.tray > svg:first-child { margin-right: 6px; }
.tray time { margin: 0 4px 0 11px; font-size: 14px; line-height: 22px; text-align: center; }
.tray .peek { width: 14px; background: linear-gradient(#5c76a8, #1c3468 40%, #2c58a8); border-color: #0d1d45; box-shadow: inset 1px 1px 0 #8ea8d8; }
```
FILE: plots.js
```js
// Seeded generator so that every load draws the same traces.
let seed = 20230901;
function rnd() {
  seed = (seed + 0x6d2b79f5) | 0;
  let t = Math.imul(seed ^ (seed >>> 15), 1 | seed);
  t = (t + Math.imul(t ^ (t >>> 7), 61 | t)) ^ t;
  return ((t ^ (t >>> 14)) >>> 0) / 4294967296;
}
const gauss = () => rnd() + rnd() + rnd() + rnd() - 2;

function hash(x, y) {
  let h = Math.imul(x, 374761393) + Math.imul(y, 668265263);
  h = Math.imul(h ^ (h >>> 13), 1274126177);
  return ((h ^ (h >>> 16)) >>> 0) / 4294967296;
}
function smooth(x, y) {
  const i = Math.floor(x), j = Math.floor(y);
  let u = x - i, v = y - j;
  u = u * u * (3 - 2 * u);
  v = v * v * (3 - 2 * v);
  const a = hash(i, j), b = hash(i + 1, j), c = hash(i, j + 1), d = hash(i + 1, j + 1);
  return a + (b - a) * u + (c - a) * v + (a - b - c + d) * u * v;
}

// LiDAR colour ramp, low to high
const RAMP = [
  [0, 255, 255, 255], [0.03, 190, 190, 205], [0.14, 52, 52, 255], [0.33, 32, 136, 120],
  [0.48, 0, 255, 0], [0.6, 255, 255, 48], [0.7, 255, 188, 0], [0.78, 255, 0, 0], [1, 150, 0, 145]
];
function ramp(t) {
  if (t > 1) return [255, 0, 255];
  if (t < 0) return [0, 0, 0];
  let k = 1;
  while (RAMP[k][0] < t) k++;
  const a = RAMP[k - 1], b = RAMP[k], f = (t - a[0]) / (b[0] - a[0]);
  return [1, 2, 3].map(n => a[n] + (b[n] - a[n]) * f);
}

function heatmap(id, pixel) {
  const canvas = document.getElementById(id);
  const ctx = canvas.getContext('2d');
  const w = canvas.width, h = canvas.height;
  const img = ctx.createImageData(w, h);
  for (let y = 0; y < h; y++) {
    for (let x = 0; x < w; x++) {
      let c = pixel(x, (1 - (y - 1) / (h - 3)) * 5000, y);
      if (y === 0 || x === 0) c = [70, 90, 60];
      if (y === h - 1 || x === w - 1) c = [240, 240, 225];
      const o = (y * w + x) * 4;
      img.data[o] = c[0]; img.data[o + 1] = c[1]; img.data[o + 2] = c[2]; img.data[o + 3] = 255;
    }
  }
  ctx.putImageData(img, 0, 0);
  return ctx;
}

heatmap('backscatter', (x, r) => {
  if (r < 12) return rnd() < 0.3 ? [30, 20, 0] : [120, 200, 0];
  const top = 520 + x * 0.2 + 60 * (smooth(x / 70, 3) - 0.5);
  const streak = hash(x, 9) - 0.5;
  let t;
  if (r < top - 70) t = 0.685 + 0.006 * smooth(x / 12, r / 60) + (r < 250 && r > 150 ? 0.012 * smooth(x / 9, 1) : 0);
  else if (r < top + 40) t = 0.675 - 0.07 * (r - top + 70) / 110;
  else if (r < top + 370) t = 0.59 - 0.1 * (r - top - 40) / 330 + 0.016 * streak;
  else if (r < 2000) t = 0.47 - 0.03 * smooth(x / 4, r / 90) * Math.min(1, (r - 800) / 600) + 0.02 * (rnd() - 0.5);
  else t = 0.462 + 0.115 * Math.pow((r - 2000) / 3000, 1.3) + gauss() * 0.06 * (r - 1400) / 3600;
  if (r > 1350) {
    let p = Math.min(0.17, 0.012 + Math.pow((r - 1350) / 1900, 1.5) * 0.16);
    if (Math.abs(r - 3220) < 60 || Math.abs(r - 4330) < 14) p += 0.08;
    if (r > 4300) p -= 0.04 * (r - 4300) / 700;
    if (rnd() < p) return rnd() < 0.7 ? [0, 0, 0] : [10, 70, 20];
  }
  return ramp(r > 900 ? Math.max(0.43, t) : t);
});

// Each column has its own chance of saturating and its own clean height
const cols = Array.from({ length: 480 }, (_, x) => ({
  bias: Math.min(1, Math.max(0, 0.95 * rnd() + 0.4 * smooth(x / 9, 21) - 0.12)),
  reach: 1300 + 1100 * rnd() + 250 * smooth(x / 20, 8),
  local: smooth(x / 14, 40)
}));
const dop = heatmap('doppler', (x, r, y) => {
  if (r < 30) return rnd() < 0.15 ? [0, 40, 0] : [40, 220, 0];
  const c = cols[x];
  const lift = 0.08 * (smooth(x / 60 + 3, r / 400) - 0.5);
  const fine = 0.06 * (smooth(x / 4, r / 110) - 0.5) + 0.04 * (smooth(x / 11 + 9, r / 140) - 0.5);
  let base = 0.62 + lift + fine + 0.03 * x / 478;
  if (r < 130) base -= 0.05 * (1 - r / 130);
  const patch = smooth(x / 7, r / 90);
  if (x < 22 && r > 420 && r < 900) base -= Math.max(0, patch - 0.45) * 0.3;
  if (x > 12 && x < 70 && r > 900 && r < 1120) base -= Math.max(0, patch - 0.4) * 0.25;
  if (r < c.reach) {
    const wild = Math.max(0, (r - 750) / 1250);
    if (r > 1350 && rnd() < 0.32 * (r - 1350) / 1000) {
      const q = rnd();
      return q < 0.35 ? [255, 0, 255] : q < 0.5 ? [0, 0, 0] : ramp(0.72 + 0.25 * rnd());
    }
    const green = c.local > 0.55 ? (c.local - 0.55) * 0.35 : 0;
    return ramp(Math.max(0.42, Math.min(0.79, base - wild * (0.035 + green) + gauss() * (0.012 + 0.08 * Math.min(1.2, wild)))));
  }
  // Saturated samples run down a column for a few gates at a time
  const k = rnd() < 0.45 ? hash(x, 900 + Math.floor(y / 4)) : rnd();
  const strength = Math.min(1, (r - c.reach) / 1300 + 0.35);
  const hot = (0.04 + 0.84 * c.bias) * strength;
  if (k < hot) return [255, 0, 255];
  if (k < hot + (0.24 - 0.12 * c.bias) * strength) return [0, 0, 0];
  const lean = c.bias < 0.25 ? 0.53 : 0.62;
  return ramp(Math.max(0.2, Math.min(1, lean + gauss() * (0.1 + 0.2 * strength))));
});
// Graph cursor
for (const [color, width] of [['#fff', 3], ['#000', 1]]) {
  dop.strokeStyle = color;
  dop.lineWidth = width;
  dop.beginPath();
  dop.moveTo(15.5, 213); dop.lineTo(15.5, 223);
  dop.moveTo(10, 218.5); dop.lineTo(21, 218.5);
  dop.stroke();
}

function grid(ctx, w, h, rows) {
  ctx.fillStyle = '#000';
  ctx.fillRect(0, 0, w, h);
  for (let i = 0; i <= 48; i++) {
    ctx.fillStyle = i % 8 ? '#0a3a0e' : '#14651a';
    ctx.fillRect(Math.round(i * (w - 1) / 48), 0, 1, h);
  }
  rows.forEach(([y, major]) => {
    ctx.fillStyle = major ? '#14651a' : '#0a3a0e';
    ctx.fillRect(0, Math.round(y), w, 1);
  });
}
function frame(ctx, w, h) {
  ctx.fillStyle = '#555';
  ctx.fillRect(0, 0, w, 1);
  ctx.fillStyle = '#eee';
  ctx.fillRect(0, h - 1, w, 1);
  ctx.fillRect(w - 1, 0, 1, h);
}

{
  const canvas = document.getElementById('ascope'), ctx = canvas.getContext('2d');
  const w = canvas.width, h = canvas.height, rows = [];
  for (let i = 0; i < 21; i++) rows.push([1 + i * 4.9, i % 5 === 0]);
  grid(ctx, w, h, rows);
  ctx.strokeStyle = '#fff';
  ctx.lineWidth = 1.5;
  ctx.beginPath();
  ctx.moveTo(2.5, h);
  ctx.lineTo(2.5, 0);
  ctx.moveTo(16, 0);
  [[17, 28], [19, 48], [23, 68], [28, 87], [33, 91]].forEach(p => ctx.lineTo(...p));
  for (let x = 34; x < w - 1; x += 0.7) ctx.lineTo(x, 95.5 + gauss() * 3.2 - Math.max(0, 50 - x) * 0.15);
  ctx.stroke();
  ctx.fillStyle = '#e8e840';
  ctx.fillRect(158, 0, 1, h);
  frame(ctx, w, h);
}
{
  const canvas = document.getElementById('velocity'), ctx = canvas.getContext('2d');
  const w = canvas.width, h = canvas.height, rows = [];
  for (let i = 0; i < 21; i++) rows.push([1 + i * 5.1, i % 5 === 0]);
  grid(ctx, w, h, rows);
  ctx.fillStyle = '#fff';
  ctx.fillRect(0, 59, 1, 46);
  let prev = 49;
  for (let x = 1; x < 52; x++) {
    let y = x < 12 ? 49 - x * 0.8 : 41;
    y += gauss() * (x > 26 ? (x - 20) * 0.4 : 1) + (x > 26 ? (x - 26) * 0.55 : 0);
    ctx.fillRect(x, Math.round(Math.min(y, prev)), 1, Math.round(Math.abs(y - prev)) + 2);
    prev = y;
  }
  // Full-height spikes come in narrow clusters
  const solid = [[45, 46], [57, 61], [72, 74], [92, 94], [104, 107], [169, 177], [221, 226]];
  for (let x = 50; x < w; x++) {
    let top = Math.round(62 + gauss() * 18);
    let bottom = x < 76 ? top + 12 + Math.round(rnd() * 12) : h;
    if (x < 76) top -= 14;
    if (rnd() < 0.23) { top = 0; if (rnd() < 0.7) bottom = h; }
    else if (x > 76 && rnd() < 0.1) top = 80 + Math.round(rnd() * 24);
    if (x > 76 && x < 88) top = Math.max(top, 50);
    if (solid.some(([a, b]) => x >= a && x <= b)) { top = 0; bottom = h; }
    ctx.fillRect(x, top, 1, bottom - top);
  }
  frame(ctx, w, h);
}
```
